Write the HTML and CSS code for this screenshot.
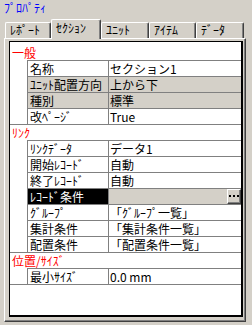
FILE: index.html
```html
<!DOCTYPE html>
<html lang="ja">
<head>
    <meta charset="UTF-8">
    <meta name="viewport" content="width=device-width, initial-scale=1.0">
    <title>ﾌﾟﾛﾊﾟﾃｨ</title>
    <link rel="stylesheet" href="styles.css">
</head>
<body>
    <div class="title">ﾌﾟﾛﾊﾟﾃｨ</div>
    <div class="tabs">
        <div class="tab t1">ﾚﾎﾟｰﾄ</div>
        <div class="tab t2 on">ｾｸｼｮﾝ</div>
        <div class="tab t3">ﾕﾆｯﾄ</div>
        <div class="tab t4">ｱｲﾃﾑ</div>
        <div class="tab t5">ﾃﾞｰﾀ</div>
    </div>
    <div class="panel">
        <div class="list">
            <div class="group first">
                <div class="cat">一般</div>
                <div class="rows">
                    <div class="row"><div class="k">名称</div><div class="v">セクション1</div></div>
                    <div class="row gray"><div class="k">ﾕﾆｯﾄ配置方向</div><div class="v">上から下</div></div>
                    <div class="row gray"><div class="k">種別</div><div class="v">標準</div></div>
                    <div class="row"><div class="k">改ﾍﾟｰｼﾞ</div><div class="v">True</div></div>
                </div>
            </div>
            <div class="group">
                <div class="cat">ﾘﾝｸ</div>
                <div class="rows">
                    <div class="row"><div class="k">ﾘﾝｸﾃﾞｰﾀ</div><div class="v">データ1</div></div>
                    <div class="row"><div class="k">開始ﾚｺｰﾄﾞ</div><div class="v">自動</div></div>
                    <div class="row"><div class="k">終了ﾚｺｰﾄﾞ</div><div class="v">自動</div></div>
                    <div class="row sel">
                        <div class="k">ﾚｺｰﾄﾞ条件</div>
                        <div class="v">
                            <span class="dots">
                                <svg width="12" height="13" viewBox="0 0 12 13">
                                    <rect x="1" y="5" width="2" height="2" fill="#000"/>
                                    <rect x="5" y="5" width="2" height="2" fill="#000"/>
                                    <rect x="9" y="5" width="2" height="2" fill="#000"/>
                                </svg>
                            </span>
                        </div>
                    </div>
                    <div class="row"><div class="k">ｸﾞﾙｰﾌﾟ</div><div class="v">「ｸﾞﾙｰﾌﾟ一覧」</div></div>
                    <div class="row"><div class="k">集計条件</div><div class="v">「集計条件一覧」</div></div>
                    <div class="row"><div class="k">配置条件</div><div class="v">「配置条件一覧」</div></div>
                </div>
            </div>
            <div class="group">
                <div class="cat">位置/ｻｲｽﾞ</div>
                <div class="rows">
                    <div class="row"><div class="k">最小ｻｲｽﾞ</div><div class="v">0.0 mm</div></div>
                </div>
            </div>
        </div>
    </div>
</body>
</html>
```

FILE: styles.css
```css
body { margin: 0; width: 252px; height: 325px; overflow: hidden; background: #d4d0c8; font-family: "Noto Sans CJK JP", sans-serif; font-size: 12px; color: #000; }

.title { height: 19px; line-height: 16px; padding-left: 4px; color: #0000ff; }

/* abas */
.tabs { display: flex; align-items: flex-end; height: 19px; padding-left: 5px; }
.tab { box-sizing: border-box; height: 16px; line-height: 14px; padding-left: 4px; border-top: 1px solid #fff; border-left: 1px solid #fff; border-right: 1px solid #404040; box-shadow: inset -1px 0 #808080; border-radius: 2px 2px 0 0; background: #d4d0c8; }
.tab.on { height: 20px; margin-bottom: -1px; position: relative; z-index: 1; line-height: 15px; }
.t1 { width: 46px; }
.t2 { width: 50px; }
.t3 { width: 48px; }
.t4 { width: 47px; }
.t5 { width: 48px; }

/* painel */
.panel { display: flex; flex-direction: column; box-sizing: border-box; width: 242px; height: 284px; margin-left: 4px; padding: 2px 2px 4px 4px; border-top: 1px solid #fff; border-left: 1px solid #fff; border-right: 1px solid #404040; border-bottom: 1px solid #404040; box-shadow: inset -1px -1px #808080; }
.list { flex: 1; background: #fff; border: 1px solid #000; border-right-width: 2px; border-bottom-width: 2px; padding-top: 3px; }

.group { border-bottom: 1px solid #808080; }
.cat { height: 15px; line-height: 15px; padding-left: 2px; color: #ff0000; }
.rows { margin-left: 17px; border-top: 1px solid #808080; border-left: 1px solid #808080; }
.row { display: flex; height: 15px; line-height: 15px; border-bottom: 1px solid #808080; }
.row:last-child { border-bottom: none; }
.k { width: 78px; padding-left: 2px; white-space: nowrap; overflow: hidden; }
.v { flex: 1; display: flex; padding-left: 1px; border-left: 1px solid #808080; white-space: nowrap; overflow: hidden; }

.gray .k, .gray .v { background: #d4d0c8; }
.sel .k { background: #000; color: #fff; }
.sel .v { background: #d4d0c8; }

.dots { display: flex; box-sizing: border-box; width: 14px; height: 15px; margin-left: auto; border-top: 1px solid #fff; border-left: 1px solid #fff; border-right: 1px solid #404040; border-bottom: 1px solid #404040; box-shadow: inset -1px -1px #808080; background: #d4d0c8; }
```
